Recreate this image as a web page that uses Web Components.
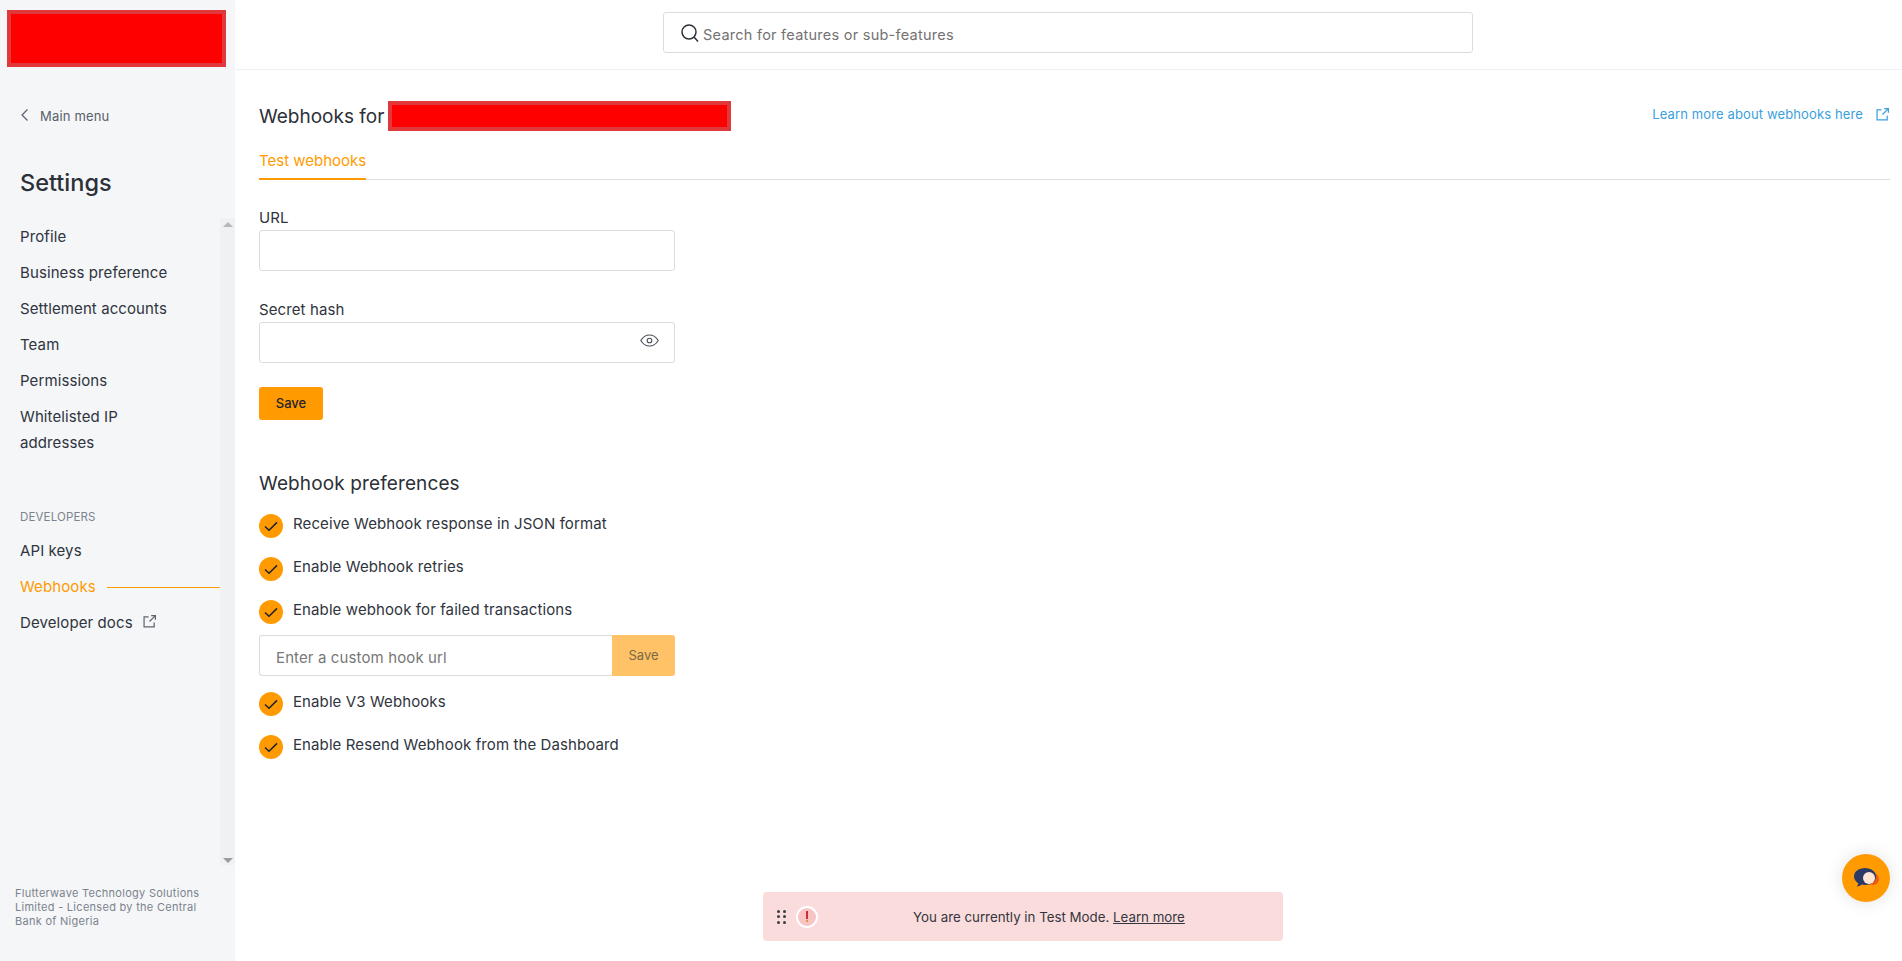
<!DOCTYPE html>
<html lang="en">
<head>
<meta charset="utf-8">
<title>Webhooks</title>
<style>
html,body{margin:0;height:100%;overflow:hidden;background:#fff}
body{font-family:Inter,"Noto Sans",sans-serif;color:#2c3038}
</style>
</head>
<body>
<fw-app>
  <fw-sidebar slot="side">
    <fw-nav-item>Profile</fw-nav-item>
    <fw-nav-item>Business preference</fw-nav-item>
    <fw-nav-item>Settlement accounts</fw-nav-item>
    <fw-nav-item>Team</fw-nav-item>
    <fw-nav-item>Permissions</fw-nav-item>
    <fw-nav-item>Whitelisted IP<br>addresses</fw-nav-item>
    <fw-nav-heading>DEVELOPERS</fw-nav-heading>
    <fw-nav-item>API keys</fw-nav-item>
    <fw-nav-item active>Webhooks</fw-nav-item>
    <fw-nav-item external>Developer docs</fw-nav-item>
  </fw-sidebar>
  <fw-topbar slot="top"></fw-topbar>
  <fw-webhooks slot="main">
    <fw-field label="URL"></fw-field>
    <fw-field label="Secret hash" eye></fw-field>
    <fw-button>Save</fw-button>
    <h2 slot="prefs-title">Webhook preferences</h2>
    <fw-check slot="prefs">Receive Webhook response in JSON format</fw-check>
    <fw-check slot="prefs">Enable Webhook retries</fw-check>
    <fw-check slot="prefs">Enable webhook for failed transactions</fw-check>
    <fw-custom-hook slot="prefs"></fw-custom-hook>
    <fw-check slot="prefs">Enable V3 Webhooks</fw-check>
    <fw-check slot="prefs">Enable Resend Webhook from the Dashboard</fw-check>
  </fw-webhooks>
</fw-app>
<fw-banner></fw-banner>
<fw-chat></fw-chat>

<script>
const EXT = (c,s)=>`<svg width="${s}" height="${s}" viewBox="0 0 16 16" fill="none" stroke="${c}" stroke-width="1.3"><path d="M7 3H2.200v10.800H13V9"/><path d="M8 8l6-6M9.800 1.700h4.500v4.500"/></svg>`;
function def(name, html){
  customElements.define(name, class extends HTMLElement{
    constructor(){super();this.attachShadow({mode:'open'});if(typeof html!=='function')this.shadowRoot.innerHTML=html;}
    connectedCallback(){
      if(typeof html==='function'&&!this._d){this._d=1;this.shadowRoot.innerHTML=html(this);}
    }
  });
}
def('fw-app',`<style>
:host{display:grid;grid-template-columns:235px 1fr;grid-template-rows:70px 1fr;height:961px}
.s{grid-row:1/3;display:block}
</style><div class="s"><slot name="side"></slot></div><slot name="top"></slot><slot name="main"></slot>`);

def('fw-redact',`<style>:host{display:block;background:#f00;border:4px solid #e1383b;box-sizing:border-box}</style>`);

def('fw-sidebar',`<style>
:host{display:flex;flex-direction:column;height:961px;background:#f4f6f8;box-sizing:border-box}
.logo{margin:10px 0 0 7px;width:219px;height:57px}
.back{display:flex;align-items:center;margin:30px 0 0 20px;height:38px;font-size:13px;color:#59606c;gap:11px;letter-spacing:.17px}
.back svg{margin-top:-2px}
h1{margin:29px 0 0 20px;font:500 23.500px/37px Inter,sans-serif;color:#2c3038;height:36px}
.mid{display:flex;margin-top:18px;height:647px}
nav{flex:1;min-width:0;padding-left:20px}
.track{width:15px;background:#f0f1f2;display:flex;flex-direction:column;justify-content:space-between;align-items:center;padding:4px 0 2px;box-sizing:border-box}
.up{border:5px solid transparent;border-top:0;border-bottom:5px solid #b5b7ba;width:0}
.dn{border:5px solid transparent;border-bottom:0;border-top:5px solid #9a9c9f;width:0}
.foot{margin:21px 0 0 15px;width:205px;font-size:11px;line-height:14px;color:#7c838d;letter-spacing:.28px}
</style>
<fw-redact class="logo"></fw-redact>
<div class="back"><svg width="9" height="14" viewBox="0 0 9 14" fill="none" stroke="#59606c" stroke-width="1.2"><path d="M7.500 1.500L2 7l5.500 5.500"/></svg><span>Main menu</span></div>
<h1>Settings</h1>
<div class="mid"><nav><slot></slot></nav><div class="track"><i class="up"></i><i class="dn"></i></div></div>
<div class="foot">Flutterwave Technology Solutions Limited - Licensed by the Central Bank of Nigeria</div>`);

def('fw-nav-item',el=>`<style>
:host{display:flex;align-items:center;gap:${el.hasAttribute('external')?9:11}px;padding:6px 0 4px;font-size:15px;line-height:26px;color:${el.hasAttribute('active')?'#ff9b00':'#2f343d'};letter-spacing:.1px;white-space:nowrap}
.l{flex:1;height:1px;background:#ff9b00}
svg{margin-top:-4px}
</style><span><slot></slot></span>${el.hasAttribute('active')?'<i class="l"></i>':''}${el.hasAttribute('external')?EXT('#5f656f',15):''}`);

def('fw-nav-heading',`<style>:host{display:block;margin:46px 0 6px;padding-top:1px;box-sizing:border-box;font-size:11.500px;line-height:20px;height:20px;color:#7c838d;letter-spacing:.15px}</style><slot></slot>`);

def('fw-topbar',`<style>
:host{display:flex;justify-content:flex-start;box-sizing:border-box;height:70px;border-bottom:1px solid #eff0f1;padding:12px 0 0 428px;background:#fff}
.s{width:810px;height:41px;box-sizing:border-box;border:1px solid #dcdcdc;border-radius:3px;display:flex;align-items:center;gap:3px;padding:0 0 0 16px;font-size:14.500px;color:#737373;letter-spacing:.25px}
.s span{margin-top:4px}
</style><div class="s"><svg width="20" height="20" viewBox="0 0 20 20" fill="none" stroke="#2c3038" stroke-width="1.500"><circle cx="9" cy="9" r="7"/><path d="M14 14l4 4.500"/></svg><span>Search for features or sub-features</span></div>`);

def('fw-webhooks',`<style>
:host{display:block;padding:31px 12px 0 24px;min-width:0}
.head{display:flex;align-items:center;height:30px;font-size:19px;color:#2c3038}
.red{width:343px;height:30px;margin-left:4px}
.more{margin-left:auto;display:flex;align-items:center;gap:12px;font-size:13px;color:#3a9fe0;letter-spacing:.13px;margin-top:-4px}
.tabs{margin-top:16px;border-bottom:1px solid #dedede;height:33px;box-sizing:border-box}
.tab{display:inline-block;height:33px;box-sizing:border-box;line-height:28px;font-size:15px;color:#ff9b00;border-bottom:2px solid #ff9b00}
.form{margin-top:27px;display:flex;flex-direction:column;gap:28px;width:416px}
::slotted(h2){font:400 19px/32px Inter,sans-serif;margin:48px 0 14px;color:#2c3038;letter-spacing:.12px}
.prefs{display:flex;flex-direction:column;width:416px}
</style>
<div class="head"><span class="t">Webhooks for</span><fw-redact class="red"></fw-redact><a class="more"><span>Learn more about webhooks here</span>${EXT('#3a9fe0',15)}</a></div>
<div class="tabs"><span class="tab">Test webhooks</span></div>
<div class="form"><slot></slot></div>
<slot name="prefs-title"></slot>
<div class="prefs"><slot name="prefs"></slot></div>`);

def('fw-field',el=>`<style>
:host{display:block}
label{display:block;font-size:15px;line-height:20px;padding-top:1px;margin-bottom:2px;color:#2f343d;letter-spacing:.1px}
.b{height:41px;box-sizing:border-box;border:1px solid #dcdcdc;border-radius:3px;display:flex;align-items:center;justify-content:flex-end;padding:0 15px 4px 0;background:#fff}
</style><label>${el.getAttribute('label')}</label><div class="b">${el.hasAttribute('eye')?'<svg width="19" height="13" viewBox="0 0 19 13" fill="none" stroke="#4a4f58" stroke-width="1.100"><path d="M.8 6.500C3 2.800 6 1 9.500 1s6.500 1.800 8.700 5.500C16 10.200 13 12 9.500 12S3 10.200.8 6.500z"/><circle cx="9.500" cy="6.500" r="2.300"/></svg>':''}</div>`);

def('fw-button',`<style>
:host{display:block;width:64px;height:33px;margin-top:-4px;background:#ff9b00;border-radius:3px;text-align:center;font-size:13px;font-weight:500;line-height:33px;color:#1f232b}
</style><slot></slot>`);

def('fw-check',`<style>
:host{display:flex;gap:10px;height:24px;margin-bottom:19px;font-size:15px;line-height:20px;color:#2f343d;letter-spacing:.1px;white-space:nowrap}
svg{flex:none}
</style><svg width="24" height="24" viewBox="0 0 24 24"><circle cx="12" cy="12" r="12" fill="#ff9b00"/><path d="M6 12.500l4 3.700 8-7.800" fill="none" stroke="#1c2233" stroke-width="1.500"/></svg><span><slot></slot></span>`);

def('fw-custom-hook',`<style>
:host{display:flex;height:41px;margin:-8px 0 16px;box-sizing:border-box}
.i{flex:1;border:1px solid #dcdcdc;border-right:0;border-radius:3px 0 0 3px;box-sizing:border-box;padding:4px 0 0 16px;font-size:15px;line-height:36px;color:#777;letter-spacing:.12px}
.s{width:63px;background:#ffc266;border-radius:0 3px 3px 0;text-align:center;font-size:13px;line-height:40px;color:#7b6a48}
</style><div class="i">Enter a custom hook url</div><div class="s">Save</div>`);

def('fw-banner',`<style>
:host{position:fixed;left:763px;top:892px;width:520px;height:49px;background:#fbdcdd;border-radius:4px;display:flex;align-items:center;font-size:13.300px;color:#33363d}
.g{display:flex;align-items:center;gap:10px;padding-left:14px;width:38px}
.dots{display:grid;grid-template-columns:3px 3px;gap:2.500px;flex:none}
.dots i{width:3px;height:3px;border-radius:50%;background:#3a3d45}
.c{flex:none;width:22px;height:22px;box-sizing:border-box;border:2px solid #fff;border-radius:50%;background:#f9c4c5;display:flex;flex-direction:column;align-items:center;justify-content:center;gap:1px}
.c b{width:2px;height:8px;background:#d92a2e}.c u{width:2px;height:2px;background:#d9a32e}
.t{flex:1;text-align:center}
a{color:inherit;text-decoration:underline}
</style><div class="g"><div class="dots"><i></i><i></i><i></i><i></i><i></i><i></i></div><div class="c"><b></b><u></u></div></div><div class="t">You are currently in Test Mode. <a>Learn more</a></div>`);

def('fw-chat',`<style>
:host{position:fixed;left:1842px;top:854px;width:48px;height:48px;border-radius:50%;background:#ff9b00;box-shadow:0 0 18px rgba(0,0,0,.12);display:flex;align-items:center;justify-content:center}
</style><svg width="26" height="22" viewBox="0 0 26 22"><circle cx="20" cy="12" r="6" fill="#f2590f"/><path d="M12 1c6 0 11 3.500 11 8.500S18 18 12 18c-1.200 0-2.300-.1-3.300-.4C7.500 18.800 5.500 19.500 3.500 19.500c1-.8 1.700-2 1.800-3.300C2.700 14.700 1 12.300 1 9.500 1 4.500 6 1 12 1z" fill="#2b3a67"/><circle cx="16" cy="11" r="6" fill="#fde6d6"/></svg>`);
</script>
</body>
</html>
